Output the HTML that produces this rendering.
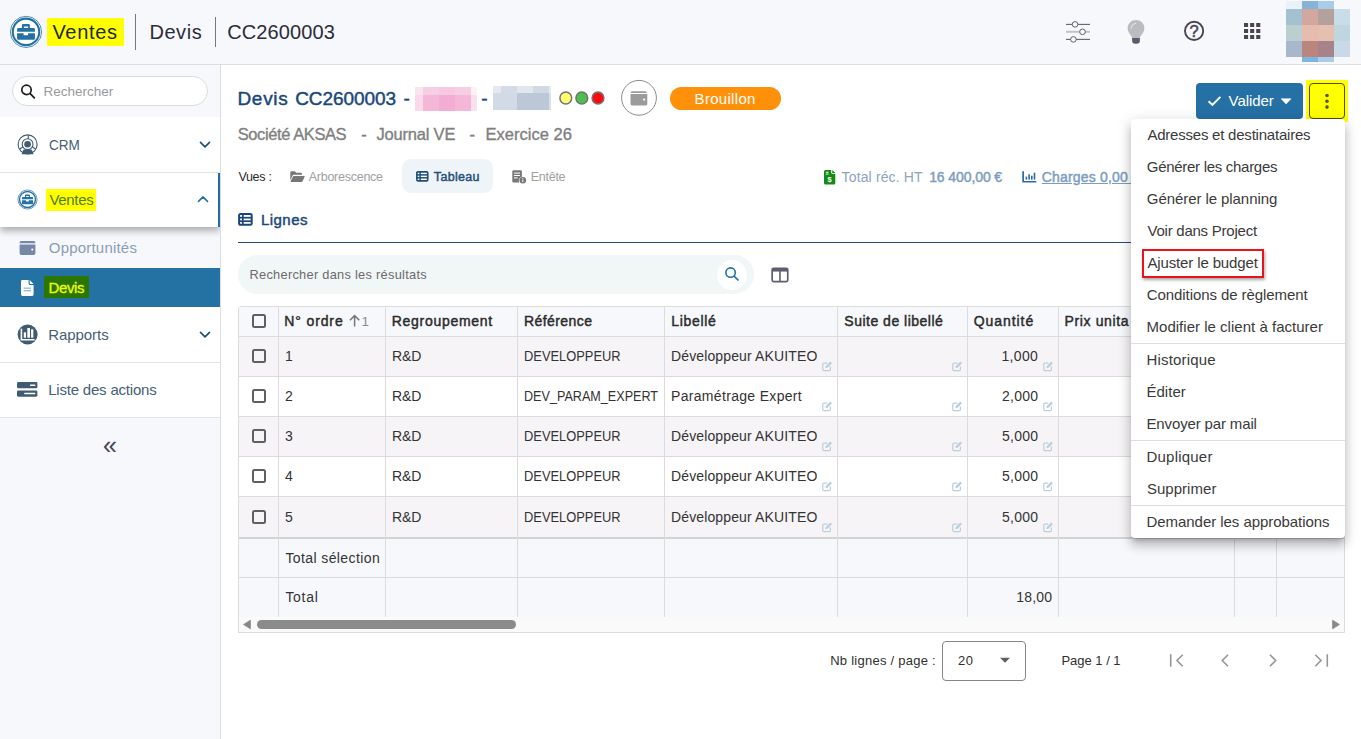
<!DOCTYPE html>
<html lang="fr">
<head>
<meta charset="utf-8">
<title>Devis CC2600003</title>
<style>
*{box-sizing:border-box;margin:0;padding:0}
html,body{width:1361px;height:739px;overflow:hidden;background:#fff;font-family:"Liberation Sans","DejaVu Sans",sans-serif;color:#333}
.a{position:absolute}
.t{position:absolute;white-space:nowrap;line-height:1}
#hdr{left:0;top:0;width:1361px;height:65px;background:#f7f8fc;border-bottom:1px solid #dcdde1}
#side{left:0;top:65px;width:221px;height:674px;background:#f7f8fc;border-right:1px solid #dcdde1}
.hl{background:#ffff00}
.vsep{background:#777;width:1px}
.navrow{left:0;width:220px;background:#fff;border-bottom:1px solid #e3e3e6}
.navtxt{font-size:15px;color:#476075}
</style>
</head>
<body>
<!-- HEADER -->
<div id="hdr" class="a"></div>
<svg class="a" style="left:9px;top:15px" width="34" height="34" viewBox="0 0 34 34">
  <circle cx="17" cy="16.900" r="15.600" fill="#fff" stroke="#2471a3" stroke-width="0.800"/>
  <circle cx="17" cy="16.900" r="13.250" fill="#fff" stroke="#2471a3" stroke-width="2.100"/>
  <path d="M8.100 14.300a1.400 1.400 0 0 1 1.400-1.400h15.050a1.400 1.400 0 0 1 1.400 1.400v2.400H8.100zM12.900 12.900v-2.700a1.200 1.200 0 0 1 1.200-1.200h5.600a1.200 1.200 0 0 1 1.200 1.200v2.700h-1.800v-1.500h-4.200v1.500zM8.100 18.200h6.500v2.100h4.500v-2.100h6.850v5.200a1.400 1.400 0 0 1-1.400 1.400H9.500a1.400 1.400 0 0 1-1.400-1.400z" fill="#2471a3"/>
</svg>
<div class="a hl" style="left:47px;top:18px;width:77px;height:28px"></div>
<div class="t" id="h1" style="left:52.4px;top:22px;font-size:20px;color:#1f2a33;letter-spacing:0.7px">Ventes</div>
<div class="a vsep" style="left:135px;top:14px;height:36px"></div>
<div class="t" id="h2" style="left:149.4px;top:22px;font-size:20px;color:#2c2c3a;letter-spacing:0.56px">Devis</div>
<div class="a vsep" style="left:215px;top:17px;height:30px"></div>
<div class="t" id="h3" style="left:227.2px;top:22px;font-size:20px;color:#2c2c3a;letter-spacing:0.13px">CC2600003</div>


<!-- header right icons -->
<svg class="a" style="left:1064px;top:19px" width="28" height="26" viewBox="0 0 28 26">
  <line x1="2" y1="5.400" x2="26" y2="5.400" stroke="#62606c" stroke-width="1.100"/>
  <line x1="2" y1="12.800" x2="26" y2="12.800" stroke="#c4c4c8" stroke-width="2"/>
  <line x1="2" y1="20.400" x2="26" y2="20.400" stroke="#62606c" stroke-width="1.100"/>
  <g stroke="#62606c" stroke-width="1" fill="#f7f8fc"><circle cx="11.050" cy="5.400" r="2.800"/><circle cx="18.500" cy="12.800" r="2.800"/><circle cx="9.400" cy="20.400" r="2.800"/></g>
</svg>
<svg class="a" style="left:1126px;top:19px" width="20" height="26" viewBox="0 0 20 26">
  <path d="M10 .9a8.400 8.400 0 0 1 8.400 8.400c0 3-1.600 5-2.700 6.400-.9 1.200-1.800 2.200-1.800 3.200H6.100c0-1-.9-2-1.800-3.200C3.200 14.300 1.600 12.300 1.600 9.300A8.400 8.400 0 0 1 10 .9z" fill="#bcbcc0"/>
  <path d="M6.100 18.900h7.800v2.600a3.300 3.300 0 0 1-3.300 3.300H9.400a3.300 3.300 0 0 1-3.300-3.300z" fill="#5d5a6b"/>
  <path d="M5.300 9a4.800 4.800 0 0 1 4.200-4.500" fill="none" stroke="#ececee" stroke-width="1" stroke-linecap="round"/>
</svg>
<svg class="a" style="left:1182px;top:19px" width="24" height="24" viewBox="0 0 24 24">
  <circle cx="12.100" cy="11.900" r="9.100" fill="none" stroke="#4a4452" stroke-width="1.900"/>
  <text x="12.100" y="17.800" text-anchor="middle" font-family="Liberation Sans, sans-serif" font-size="16.500" fill="#4a4452" stroke="#4a4452" stroke-width="0.500">?</text>
</svg>
<svg class="a" style="left:1244px;top:23px" width="17" height="17" viewBox="0 0 17 17" fill="#4a4452">
  <rect x="0" y="0" width="4.100" height="4"/><rect x="6.100" y="0" width="4.100" height="4"/><rect x="12.200" y="0" width="4.100" height="4"/>
  <rect x="0" y="6" width="4.100" height="4"/><rect x="6.100" y="6" width="4.100" height="4"/><rect x="12.200" y="6" width="4.100" height="4"/>
  <rect x="0" y="12" width="4.100" height="4"/><rect x="6.100" y="12" width="4.100" height="4"/><rect x="12.200" y="12" width="4.100" height="4"/>
</svg>
<!-- avatar mosaic -->
<svg class="a" style="left:1286px;top:0" width="64" height="63" viewBox="0 0 64 63" shape-rendering="crispEdges">
  <rect x="0" y="1" width="16" height="8" fill="#eaf1f8"/><rect x="16" y="1" width="16" height="8" fill="#86b4d8"/><rect x="32" y="1" width="16" height="8" fill="#a9cde8"/>
  <rect x="0" y="9" width="16" height="16" fill="#a5c0d0"/><rect x="16" y="9" width="16" height="16" fill="#d1a79e"/><rect x="32" y="9" width="16" height="16" fill="#b5a19c"/><rect x="48" y="9" width="16" height="16" fill="#c8dcea"/>
  <rect x="0" y="25" width="16" height="16" fill="#bccfd0"/><rect x="16" y="25" width="16" height="16" fill="#e6bcae"/><rect x="32" y="25" width="16" height="16" fill="#e5bfaf"/><rect x="48" y="25" width="16" height="16" fill="#c0d6de"/>
  <rect x="0" y="41" width="16" height="16" fill="#a8b8cc"/><rect x="16" y="41" width="16" height="16" fill="#b9857c"/><rect x="32" y="41" width="16" height="16" fill="#a58388"/><rect x="48" y="41" width="16" height="16" fill="#c9d9e8"/>
  <rect x="16" y="57" width="16" height="5" fill="#7db5e0"/><rect x="32" y="57" width="16" height="5" fill="#a9cce8"/>
</svg>

<!-- SIDEBAR -->
<div id="side" class="a"></div>

<!-- search -->
<div class="a" style="left:12px;top:76px;width:196px;height:30px;border:1px solid #dcdcdf;border-radius:15px;background:#fff"></div>
<svg class="a" style="left:20px;top:83px" width="16" height="16" viewBox="0 0 16 16"><circle cx="6.500" cy="6.900" r="4.700" fill="none" stroke="#1f1f1f" stroke-width="1.700"/><line x1="10" y1="10.400" x2="14.300" y2="14.800" stroke="#1f1f1f" stroke-width="1.800" stroke-linecap="round"/></svg>
<div class="t" id="s0" style="left:43.6px;top:85px;font-size:13.500px;color:#9a9a9e;letter-spacing:-0.02px">Rechercher</div>

<!-- CRM -->
<div class="a navrow" style="top:117px;height:56px"></div>
<svg class="a" style="left:16px;top:133px" width="24" height="24" viewBox="0 0 24 24">
  <circle cx="11.600" cy="11.400" r="9.500" fill="#fff" stroke="#3f5c73" stroke-width="1.100"/>
  <path d="M12.300 1.900v4.300M6.700 14l-3.300 2.200M16.500 14l3.300 2.200" stroke="#3f5c73" stroke-width="1.100" fill="none"/>
  <circle cx="11.600" cy="11.200" r="5.400" fill="#fff" stroke="#3f5c73" stroke-width="1.100"/>
  <circle cx="11.600" cy="11.200" r="3.300" fill="#3f5c73"/>
  <path d="M5.600 21.300l1.300-3.600a1.700 1.700 0 0 1 1.600-1.100h6.200a1.700 1.700 0 0 1 1.600 1.100l1.300 3.600z" fill="#3f5c73"/>
</svg>
<div class="t navtxt" id="s1" style="left:49px;top:137px;transform-origin:0 50%;transform:scaleX(0.9044)">CRM</div>
<svg class="a" style="left:198px;top:140px" width="14" height="10" viewBox="0 0 14 10"><path d="M2.500 2.400l4.500 4.500 4.500-4.500" fill="none" stroke="#1f4e79" stroke-width="1.600" stroke-linecap="round" stroke-linejoin="round"/></svg>

<!-- Ventes (open) -->
<div class="a" style="left:0;top:173px;width:220px;height:54px;background:#fff;box-shadow:0 4px 7px rgba(0,0,0,.3);border-right:2px solid #1f6ca6;clip-path:inset(0 0 -14px 0)"></div>
<svg class="a" style="left:16.500px;top:188.700px" width="21" height="21" viewBox="0 0 34 34">
  <circle cx="17" cy="17" r="15.500" fill="#fff" stroke="#2471a3" stroke-width="1.100"/>
  <circle cx="17" cy="17" r="12.900" fill="#fff" stroke="#2471a3" stroke-width="2.300"/>
  <path d="M8.100 14.300a1.400 1.400 0 0 1 1.400-1.400h15.050a1.400 1.400 0 0 1 1.400 1.400v2.400H8.100zM12.900 12.900v-2.700a1.200 1.200 0 0 1 1.200-1.200h5.600a1.200 1.200 0 0 1 1.200 1.200v2.700h-1.800v-1.500h-4.200v1.500zM8.100 18.200h6.500v2.100h4.500v-2.100h6.850v5.200a1.400 1.400 0 0 1-1.400 1.400H9.500a1.400 1.400 0 0 1-1.400-1.400z" fill="#2471a3"/>
</svg>
<div class="a hl" style="left:46px;top:189px;width:50px;height:21.500px"></div>
<div class="t" id="s2" style="left:49.4px;top:192px;font-size:15px;color:#4d7d1a;letter-spacing:-0.3px">Ventes</div>
<svg class="a" style="left:196px;top:194px" width="14" height="10" viewBox="0 0 14 10"><path d="M2.500 7.400l4.500-4.500 4.500 4.500" fill="none" stroke="#2471a3" stroke-width="1.600" stroke-linecap="round" stroke-linejoin="round"/></svg>

<!-- Opportunités -->
<svg class="a" style="left:18.700px;top:241.300px" width="17" height="14" viewBox="0 0 17 14">
  <path d="M2.200 0h12.600a1.600 1.600 0 0 1 1.600 1.600v.6H.6v-.6A1.600 1.600 0 0 1 2.200 0zM.6 3.400h15.800v8.800a1.700 1.700 0 0 1-1.700 1.700H2.300a1.700 1.700 0 0 1-1.700-1.700z" fill="#7588a8"/>
  <circle cx="13.300" cy="8.600" r="1.100" fill="#f7f8fc"/>
</svg>
<div class="t" id="s3" style="left:48.8px;top:240px;font-size:15px;color:#8b9db3;letter-spacing:0.2px">Opportunités</div>

<!-- Devis (selected) -->
<div class="a" style="left:0;top:268px;width:220px;height:39px;background:#2471a3"></div>
<svg class="a" style="left:21px;top:280px" width="13" height="16" viewBox="0 0 13 16">
  <path d="M1.400 0h6.200v3.900a1 1 0 0 0 1 1H12.600v9.700a1.400 1.400 0 0 1-1.400 1.400H1.400A1.400 1.400 0 0 1 0 14.600V1.400A1.400 1.400 0 0 1 1.400 0zM8.700 0l3.900 3.900H8.700z" fill="#fff"/>
  <rect x="2.600" y="7.600" width="7.400" height="1.100" fill="#7fb0d3"/><rect x="2.600" y="10.200" width="7.400" height="1.100" fill="#7fb0d3"/>
</svg>
<div class="a" style="left:44px;top:276px;width:45px;height:22px;background:#2b7600"></div>
<div class="t" id="s4" style="left:48.6px;top:280px;font-size:15px;color:#f0fb10;-webkit-text-stroke:0.300px;letter-spacing:-0.43px">Devis</div>

<!-- Rapports -->
<div class="a navrow" style="top:307px;height:56px;border-top:0"></div>
<svg class="a" style="left:16px;top:323px" width="24" height="24" viewBox="0 0 24 24">
  <circle cx="11.600" cy="11.500" r="10" fill="#3f5c73"/>
  <path d="M4.600 5.800h1.600v10.300h12.400v1.300H4.600z" fill="#fff"/>
  <rect x="7.800" y="9.300" width="2.200" height="5.400" fill="#fff"/><rect x="11.300" y="5" width="2.700" height="9.700" fill="#fff"/><rect x="15.100" y="6.300" width="2.200" height="8.400" fill="#fff"/>
</svg>
<div class="t navtxt" id="s5" style="left:48.2px;top:327px;letter-spacing:-0.06px">Rapports</div>
<svg class="a" style="left:198px;top:330px" width="14" height="10" viewBox="0 0 14 10"><path d="M2.500 2.400l4.500 4.500 4.500-4.500" fill="none" stroke="#1f4e79" stroke-width="1.600" stroke-linecap="round" stroke-linejoin="round"/></svg>

<!-- Liste des actions -->
<div class="a navrow" style="top:363px;height:55px"></div>
<svg class="a" style="left:17px;top:382px" width="21" height="15" viewBox="0 0 21 15">
  <rect x="0" y="0" width="20.400" height="6.300" rx="1.400" fill="#3f5c73"/><rect x="0" y="8.400" width="20.400" height="6.300" rx="1.400" fill="#3f5c73"/>
  <rect x="13" y="2.400" width="5.300" height="1.500" rx=".5" fill="#fff"/><rect x="7.200" y="10.800" width="11.100" height="1.500" rx=".5" fill="#fff"/>
</svg>
<div class="t navtxt" id="s6" style="left:48.2px;top:382px;letter-spacing:-0.2px">Liste des actions</div>
<div class="t" id="s7" style="left:103px;top:433px;font-size:25px;color:#4a4658;letter-spacing:0px">«</div>


<!-- MAIN TITLE -->
<div class="t" id="m1" style="left:237.4px;top:89px;font-size:19px;-webkit-text-stroke:0.45px;color:#1a477a;letter-spacing:0.73px">Devis</div>
<div class="t" id="m2" style="left:295.2px;top:89px;font-size:19px;-webkit-text-stroke:0.45px;color:#1a477a;letter-spacing:-0.07px">CC2600003</div>
<div class="t" id="m3" style="left:403.5px;top:89px;font-size:19px;-webkit-text-stroke:0.45px;color:#1a477a;letter-spacing:0px">-</div>
<svg class="a" style="left:415px;top:87px" width="62" height="24" viewBox="0 0 62 24" shape-rendering="crispEdges">
  <rect x="0" y="0" width="62" height="24" fill="#f8d4e8"/>
  <rect x="0" y="0" width="8" height="8" fill="#fbe3f0"/><rect x="8" y="0" width="16" height="8" fill="#f7cfe5"/><rect x="24" y="0" width="16" height="8" fill="#f6c8e1"/><rect x="40" y="0" width="16" height="8" fill="#f7cfe5"/><rect x="56" y="0" width="6" height="8" fill="#fdf0f7"/>
  <rect x="0" y="8" width="8" height="16" fill="#fad9ea"/><rect x="8" y="8" width="16" height="16" fill="#f4b7d8"/><rect x="24" y="8" width="16" height="16" fill="#f3add4"/><rect x="40" y="8" width="16" height="16" fill="#f4b7d8"/><rect x="56" y="8" width="6" height="16" fill="#fbe1ef"/>
</svg>
<div class="t" id="m4" style="left:481.3px;top:89px;font-size:19px;-webkit-text-stroke:0.45px;color:#1a477a;letter-spacing:0px">-</div>
<svg class="a" style="left:493px;top:86px" width="58" height="24" viewBox="0 0 58 24" shape-rendering="crispEdges">
  <rect x="0" y="0" width="58" height="24" fill="#d0d9e4"/>
  <rect x="0" y="0" width="8" height="7" fill="#e6eaf0"/><rect x="8" y="0" width="16" height="7" fill="#d3dbe6"/><rect x="24" y="0" width="16" height="7" fill="#e2e7ed"/><rect x="40" y="0" width="16" height="7" fill="#d0d9e4"/><rect x="56" y="0" width="2" height="7" fill="#e6eaf0"/>
  <rect x="0" y="7" width="24" height="17" fill="#d1dae5"/><rect x="24" y="7" width="32" height="17" fill="#bcc8d8"/><rect x="56" y="7" width="2" height="17" fill="#d8e0ea"/>
</svg>
<svg class="a" style="left:557px;top:89px" width="50" height="18" viewBox="0 0 50 18">
  <circle cx="8.800" cy="9" r="5.900" fill="#ffff6e" stroke="#737373" stroke-width="1.500"/>
  <circle cx="24.800" cy="9" r="5.900" fill="#4fc04f" stroke="#737373" stroke-width="1.500"/>
  <circle cx="41" cy="9" r="5.900" fill="#ff0a0a" stroke="#737373" stroke-width="1.500"/>
</svg>
<svg class="a" style="left:620px;top:79px" width="38" height="38" viewBox="0 0 38 38">
  <circle cx="19" cy="18.800" r="17.400" fill="#fff" stroke="#8a8a8a" stroke-width="1"/>
  <path d="M12 12.200h13.200a1.500 1.500 0 0 1 1.500 1.500v.3H10.500v-.3A1.500 1.500 0 0 1 12 12.200zM10.500 15h16.800v9.900a1.700 1.700 0 0 1-1.700 1.700H12.200a1.700 1.700 0 0 1-1.700-1.700z" fill="#9b9b9b"/>
  <circle cx="24.100" cy="20.600" r="1.100" fill="#fff"/>
</svg>
<div class="a" style="left:670px;top:87px;width:111px;height:23px;border-radius:12px;background:#ff9009"></div>
<div class="t" id="m5" style="left:694.6px;top:91px;font-size:15px;color:#fff;letter-spacing:0.3px">Brouillon</div>

<!-- subtitle -->
<div class="t" id="m6" style="left:237.7px;top:126px;font-size:16.500px;color:#808080;-webkit-text-stroke:0.350px;letter-spacing:-0.4px">Société AKSAS</div>
<div class="t" id="m7" style="left:361.2px;top:126px;font-size:16.500px;color:#808080;-webkit-text-stroke:0.350px;letter-spacing:0px">-</div>
<div class="t" id="m8" style="left:376.5px;top:126px;font-size:16.500px;color:#808080;-webkit-text-stroke:0.350px;letter-spacing:-0.2px">Journal VE</div>
<div class="t" id="m9" style="left:469.4px;top:126px;font-size:16.500px;color:#808080;-webkit-text-stroke:0.350px;letter-spacing:0px">-</div>
<div class="t" id="m10" style="left:485.5px;top:126px;font-size:16.500px;color:#808080;-webkit-text-stroke:0.350px;letter-spacing:0.02px">Exercice 26</div>

<!-- Vues -->
<div class="t" id="v0" style="left:238.4px;top:171px;font-size:12.500px;color:#2b2b2b;letter-spacing:-0.3px">Vues :</div>
<svg class="a" style="left:290px;top:171px" width="15" height="12" viewBox="0 0 15 12">
  <path d="M.3 1.500A1.200 1.200 0 0 1 1.500.3h3.300l1.400 1.400h4.600a1.200 1.200 0 0 1 1.200 1.200v.9H3.900a1.600 1.600 0 0 0-1.500 1L.3 9.400zM3.900 4.900h10.200a.6.600 0 0 1 .55.850l-2.100 4.600a1 1 0 0 1-.9.600H1.100a.5.500 0 0 1-.45-.7l2.300-4.750a1 1 0 0 1 .95-.6z" fill="#777"/>
</svg>
<div class="t" id="v1" style="left:308.7px;top:171px;font-size:12.500px;color:#a0a0a0;letter-spacing:-0.25px">Arborescence</div>
<div class="a" style="left:402px;top:159px;width:91px;height:34px;border-radius:9px;background:#eef4f7"></div>
<svg class="a" style="left:416px;top:171.300px" width="13" height="11" viewBox="0 0 13 11">
  <rect x=".9" y=".9" width="10.800" height="8.900" rx="1" fill="#fff" stroke="#1f4e79" stroke-width="1.700"/>
  <line x1=".8" y1="3.900" x2="11.800" y2="3.900" stroke="#1f4e79" stroke-width="1.500"/><line x1=".8" y1="6.800" x2="11.800" y2="6.800" stroke="#1f4e79" stroke-width="1.500"/><line x1="4.100" y1=".8" x2="4.100" y2="9.900" stroke="#1f4e79" stroke-width="1.500"/>
</svg>
<div class="t" id="v2" style="left:433.8px;top:171px;font-size:12.500px;-webkit-text-stroke:0.45px;color:#1f4e79;letter-spacing:0.33px">Tableau</div>
<svg class="a" style="left:512px;top:170px" width="15" height="14" viewBox="0 0 15 14">
  <path d="M1.400.3h7.400a1.100 1.100 0 0 1 1.100 1.100v5.300a4 4 0 0 0-2.600 5.900H1.400A1.100 1.100 0 0 1 .3 11.500V1.400A1.100 1.100 0 0 1 1.400.3z" fill="#777"/>
  <rect x="2" y="2.600" width="6" height="1" fill="#fff"/><rect x="2" y="5" width="6" height="1" fill="#fff"/><rect x="2" y="7.400" width="3.600" height="1" fill="#fff"/>
  <circle cx="10.800" cy="10.200" r="3.300" fill="#777"/><rect x="10.300" y="9.700" width="1" height="2.400" fill="#fff"/><rect x="10.300" y="8.200" width="1" height="1" fill="#fff"/>
</svg>
<div class="t" id="v3" style="left:530.7px;top:171px;font-size:12.500px;color:#a0a0a0;letter-spacing:-0.25px">Entête</div>

<!-- totals -->
<svg class="a" style="left:824px;top:170px" width="12" height="15" viewBox="0 0 12 15">
  <path d="M1.500 0h5.700v2.700a1 1 0 0 0 1 1h3.100v9.400a1.500 1.500 0 0 1-1.500 1.500H1.500A1.500 1.500 0 0 1 0 13.100V1.500A1.500 1.500 0 0 1 1.500 0zM8.200 0l3.100 3.100H8.200z" fill="#148a14"/>
  <rect x="1.800" y="1.800" width="2.800" height=".9" fill="#fff"/><rect x="1.800" y="3.600" width="2.800" height=".9" fill="#fff"/>
  <text x="5.700" y="12.300" font-family="Liberation Sans, sans-serif" font-size="7.500" font-weight="bold" text-anchor="middle" fill="#fff">$</text>
</svg>
<div class="t" id="t1" style="left:841.6px;top:170px;font-size:14px;color:#8ca5bf;letter-spacing:0.14px">Total réc. HT</div>
<div class="t" id="t2" style="left:929.2px;top:170px;font-size:14px;-webkit-text-stroke:0.45px;color:#7d9dbf;letter-spacing:-0.1px">16 400,00 €</div>
<svg class="a" style="left:1022px;top:171px" width="15" height="12" viewBox="0 0 15 12">
  <path d="M.3.300h1.700v9.600h12.300v1.700H.3z" fill="#2c6aa0"/>
  <rect x="3.600" y="5.600" width="1.600" height="3" fill="#2c6aa0"/><rect x="6.300" y="3.300" width="1.600" height="5.300" fill="#2c6aa0"/><rect x="9" y="4.700" width="1.600" height="3.900" fill="#2c6aa0"/><rect x="11.700" y="1.700" width="1.600" height="6.900" fill="#2c6aa0"/>
</svg>
<div class="t" id="t3" style="left:1041.8px;top:170px;font-size:14px;-webkit-text-stroke:0.45px;color:#7d9dbf;text-decoration:underline;letter-spacing:0.17px">Charges 0,00&nbsp;</div>
<div class="t" id="t4" style="left:1131.500px;top:170px;font-size:14px;-webkit-text-stroke:0.45px;color:#7d9dbf;text-decoration:underline">€</div>

<!-- Valider / more -->
<div class="a" style="left:1196px;top:83px;width:107px;height:36px;border-radius:4px;background:#2570a4"></div>
<svg class="a" style="left:1207px;top:95px" width="15" height="12" viewBox="0 0 15 12"><path d="M1.600 6.200l3.800 3.700 8-8" fill="none" stroke="#fff" stroke-width="2"/></svg>
<div class="t" id="b1" style="left:1228.6px;top:93px;font-size:15px;color:#fff;letter-spacing:-0.07px">Valider</div>
<svg class="a" style="left:1280px;top:98px" width="12" height="7" viewBox="0 0 12 7"><path d="M1.200 .8h9.800L6.100 6z" fill="#fff" stroke="#fff" stroke-width=".6" stroke-linejoin="round"/></svg>
<div class="a hl" style="left:1306px;top:80px;width:42px;height:42px"></div>
<div class="a" style="left:1309px;top:83px;width:36px;height:36px;border-radius:4px;border:1px solid #4c4c10"></div>
<svg class="a" style="left:1324px;top:93px" width="6" height="17" viewBox="0 0 6 17" fill="#55550a"><circle cx="3" cy="2.500" r="1.800"/><circle cx="3" cy="8.300" r="1.800"/><circle cx="3" cy="14.100" r="1.800"/></svg>

<!-- Lignes -->
<svg class="a" style="left:238px;top:213px" width="15" height="13" viewBox="0 0 15 13">
  <rect x="1.100" y="1.100" width="12.600" height="10.700" rx="1.200" fill="#fff" stroke="#1a477a" stroke-width="2"/>
  <line x1="1" y1="4.700" x2="13.800" y2="4.700" stroke="#1a477a" stroke-width="1.700"/><line x1="1" y1="8.200" x2="13.800" y2="8.200" stroke="#1a477a" stroke-width="1.700"/><line x1="4.800" y1="1" x2="4.800" y2="12" stroke="#1a477a" stroke-width="1.700"/>
</svg>
<div class="t" id="l1" style="left:261px;top:212px;font-size:15px;-webkit-text-stroke:0.45px;color:#1a477a;letter-spacing:0.45px">Lignes</div>
<div class="a" style="left:238px;top:241.500px;width:1107px;height:1.500px;background:#1f4e79"></div>

<!-- results search -->
<div class="a" style="left:238px;top:255px;width:516px;height:39px;border-radius:20px;background:#f1f6f7"></div>
<div class="t" id="l2" style="left:249.5px;top:269px;font-size:12.800px;color:#6b6b6b;letter-spacing:0.28px">Rechercher dans les résultats</div>
<div class="a" style="left:717px;top:260px;width:30px;height:30px;border-radius:15px;background:#fff"></div>
<svg class="a" style="left:724px;top:266px" width="16" height="16" viewBox="0 0 16 16"><circle cx="6.600" cy="6.600" r="4.700" fill="none" stroke="#1f6fad" stroke-width="1.600"/><line x1="10" y1="10" x2="14.500" y2="14.500" stroke="#1f6fad" stroke-width="1.700" stroke-linecap="butt"/></svg>
<svg class="a" style="left:771px;top:266.500px" width="18" height="16" viewBox="0 0 18 16">
  <rect x="1.150" y="1.350" width="15.600" height="13.200" rx="1.500" fill="#fff" stroke="#5f5d6e" stroke-width="1.700"/><rect x="1.150" y="1.350" width="15.600" height="3.200" fill="#5f5d6e"/><line x1="8.950" y1="2" x2="8.950" y2="14" stroke="#5f5d6e" stroke-width="1.600"/>
</svg>

<!-- TABLE -->
<div class="a" style="left:238px;top:306px;width:1107px;height:327px;border:1px solid #dcdcdf;border-radius:3px 3px 0 0;background:#fafafa"></div>
<div class="a" style="left:239px;top:307px;width:1105px;height:30px;background:#f7f8fc;border-bottom:1px solid #dcdcdf"></div>
<div class="a" style="left:239px;top:337px;width:1105px;height:40px;background:#f6f4f7;border-bottom:1px solid #dcdcdf"></div>
<div class="a" style="left:239px;top:377px;width:1105px;height:40px;background:#fff;border-bottom:1px solid #dcdcdf"></div>
<div class="a" style="left:239px;top:417px;width:1105px;height:40px;background:#f6f4f7;border-bottom:1px solid #dcdcdf"></div>
<div class="a" style="left:239px;top:457px;width:1105px;height:40px;background:#fff;border-bottom:1px solid #dcdcdf"></div>
<div class="a" style="left:239px;top:497px;width:1105px;height:40px;background:#f6f4f7;"></div>
<div class="a" style="left:239px;top:539px;width:1105px;height:39px;background:#f7f8fc;border-bottom:1px solid #dcdcdf"></div>
<div class="a" style="left:239px;top:578px;width:1105px;height:39px;background:#f7f8fc;"></div>
<div class="a" style="left:239px;top:537px;width:1105px;height:2px;background:#d3d3d6"></div>
<div class="a" style="left:278px;top:307px;width:1px;height:310px;background:#dcdcdf"></div>
<div class="a" style="left:385px;top:307px;width:1px;height:310px;background:#dcdcdf"></div>
<div class="a" style="left:517px;top:307px;width:1px;height:310px;background:#dcdcdf"></div>
<div class="a" style="left:664px;top:307px;width:1px;height:310px;background:#dcdcdf"></div>
<div class="a" style="left:837px;top:307px;width:1px;height:310px;background:#dcdcdf"></div>
<div class="a" style="left:967px;top:307px;width:1px;height:310px;background:#dcdcdf"></div>
<div class="a" style="left:1058px;top:307px;width:1px;height:310px;background:#dcdcdf"></div>
<div class="a" style="left:1234px;top:307px;width:1px;height:310px;background:#dcdcdf"></div>
<div class="a" style="left:1276px;top:307px;width:1px;height:310px;background:#dcdcdf"></div>
<div class="a" style="left:252px;top:314px;width:14px;height:14px;border:2px solid #606060;border-radius:2.500px"></div>
<div class="t" id="hd1" style="left:284.3px;top:314px;font-size:14px;-webkit-text-stroke:0.45px;color:#2b2b2b;letter-spacing:0.87px">N° ordre</div>
<div class="t" id="hd2" style="left:391.8px;top:314px;font-size:14px;-webkit-text-stroke:0.45px;color:#2b2b2b;letter-spacing:0.71px">Regroupement</div>
<div class="t" id="hd3" style="left:524px;top:314px;font-size:14px;-webkit-text-stroke:0.45px;color:#2b2b2b;letter-spacing:0.42px">Référence</div>
<div class="t" id="hd4" style="left:671.3px;top:314px;font-size:14px;-webkit-text-stroke:0.45px;color:#2b2b2b;letter-spacing:0.66px">Libellé</div>
<div class="t" id="hd5" style="left:844.3px;top:314px;font-size:14px;-webkit-text-stroke:0.45px;color:#2b2b2b;letter-spacing:0.5px">Suite de libellé</div>
<div class="t" id="hd6" style="left:973.8px;top:314px;font-size:14px;-webkit-text-stroke:0.45px;color:#2b2b2b;letter-spacing:0.93px">Quantité</div>
<div class="t" id="hd7" style="left:1064.6px;top:314px;font-size:14px;-webkit-text-stroke:0.45px;color:#2b2b2b;letter-spacing:0.61px">Prix unita</div>
<svg class="a" style="left:348px;top:314px" width="14" height="14" viewBox="0 0 14 14"><path d="M6.600 12.500V1.800M1.900 6.300l4.700-4.700 4.700 4.700" fill="none" stroke="#777" stroke-width="1.500"/></svg>
<div class="t" id="hd8" style="left:361.5px;top:315px;font-size:13.500px;color:#8a8a8a;letter-spacing:0px">1</div>
<div class="a" style="left:252px;top:349px;width:14px;height:14px;border:2px solid #606060;border-radius:2.500px"></div>
<div class="t" id="r0a" style="left:285px;top:349px;font-size:14px;color:#333">1</div>
<div class="t" id="r0b" style="left:391.9px;top:349px;font-size:14px;color:#333;letter-spacing:-0.07px">R&amp;D</div>
<div class="t" id="r0c" style="left:524px;top:349px;font-size:14px;color:#333;transform-origin:0 50%;transform:scaleX(0.9198)">DEVELOPPEUR</div>
<div class="t" id="r0d" style="left:671px;top:349px;font-size:14px;color:#333;letter-spacing:0.13px">Développeur AKUITEO</div>
<div class="t" id="r0e" style="left:1001.4px;top:349px;font-size:14px;color:#333;letter-spacing:0.37px">1,000</div>
<svg class="a" style="left:821.8px;top:361px" width="10.500" height="10.500" viewBox="0 0 10.500 10.500"><path d="M5.300 2.100H1.900a1.100 1.100 0 0 0-1.100 1.100v5.400a1.100 1.100 0 0 0 1.100 1.100h5.400a1.100 1.100 0 0 0 1.100-1.100V5.400" fill="none" stroke="#bccfdc" stroke-width="1.200"/><path d="M8.300.5l1.700 1.700-4.500 4.500-2.200.5.500-2.200z" fill="#bccfdc"/></svg>
<svg class="a" style="left:951.8px;top:361px" width="10.500" height="10.500" viewBox="0 0 10.500 10.500"><path d="M5.300 2.100H1.900a1.100 1.100 0 0 0-1.100 1.100v5.400a1.100 1.100 0 0 0 1.100 1.100h5.400a1.100 1.100 0 0 0 1.100-1.100V5.400" fill="none" stroke="#bccfdc" stroke-width="1.200"/><path d="M8.300.5l1.700 1.700-4.500 4.500-2.200.5.500-2.200z" fill="#bccfdc"/></svg>
<svg class="a" style="left:1042.8px;top:361px" width="10.500" height="10.500" viewBox="0 0 10.500 10.500"><path d="M5.300 2.100H1.900a1.100 1.100 0 0 0-1.100 1.100v5.400a1.100 1.100 0 0 0 1.100 1.100h5.400a1.100 1.100 0 0 0 1.100-1.100V5.400" fill="none" stroke="#bccfdc" stroke-width="1.200"/><path d="M8.300.5l1.700 1.700-4.500 4.500-2.200.5.500-2.200z" fill="#bccfdc"/></svg>
<div class="a" style="left:252px;top:389px;width:14px;height:14px;border:2px solid #606060;border-radius:2.500px"></div>
<div class="t" id="r1a" style="left:285px;top:389px;font-size:14px;color:#333">2</div>
<div class="t" id="r1b" style="left:391.9px;top:389px;font-size:14px;color:#333;letter-spacing:-0.07px">R&amp;D</div>
<div class="t" id="r1c" style="left:524px;top:389px;font-size:14px;color:#333;transform-origin:0 50%;transform:scaleX(0.9003)">DEV_PARAM_EXPERT</div>
<div class="t" id="r1d" style="left:671px;top:389px;font-size:14px;color:#333;letter-spacing:0.32px">Paramétrage Expert</div>
<div class="t" id="r1e" style="left:1001.9px;top:389px;font-size:14px;color:#333;letter-spacing:0.3px">2,000</div>
<svg class="a" style="left:821.8px;top:401px" width="10.500" height="10.500" viewBox="0 0 10.500 10.500"><path d="M5.300 2.100H1.900a1.100 1.100 0 0 0-1.100 1.100v5.400a1.100 1.100 0 0 0 1.100 1.100h5.400a1.100 1.100 0 0 0 1.100-1.100V5.400" fill="none" stroke="#bccfdc" stroke-width="1.200"/><path d="M8.300.5l1.700 1.700-4.500 4.500-2.200.5.500-2.200z" fill="#bccfdc"/></svg>
<svg class="a" style="left:951.8px;top:401px" width="10.500" height="10.500" viewBox="0 0 10.500 10.500"><path d="M5.300 2.100H1.900a1.100 1.100 0 0 0-1.100 1.100v5.400a1.100 1.100 0 0 0 1.100 1.100h5.400a1.100 1.100 0 0 0 1.100-1.100V5.400" fill="none" stroke="#bccfdc" stroke-width="1.200"/><path d="M8.300.5l1.700 1.700-4.500 4.500-2.200.5.500-2.200z" fill="#bccfdc"/></svg>
<svg class="a" style="left:1042.8px;top:401px" width="10.500" height="10.500" viewBox="0 0 10.500 10.500"><path d="M5.300 2.100H1.900a1.100 1.100 0 0 0-1.100 1.100v5.400a1.100 1.100 0 0 0 1.100 1.100h5.400a1.100 1.100 0 0 0 1.100-1.100V5.400" fill="none" stroke="#bccfdc" stroke-width="1.200"/><path d="M8.300.5l1.700 1.700-4.500 4.500-2.200.5.500-2.200z" fill="#bccfdc"/></svg>
<div class="a" style="left:252px;top:429px;width:14px;height:14px;border:2px solid #606060;border-radius:2.500px"></div>
<div class="t" id="r2a" style="left:285px;top:429px;font-size:14px;color:#333">3</div>
<div class="t" id="r2b" style="left:391.9px;top:429px;font-size:14px;color:#333;letter-spacing:-0.07px">R&amp;D</div>
<div class="t" id="r2c" style="left:524px;top:429px;font-size:14px;color:#333;transform-origin:0 50%;transform:scaleX(0.9198)">DEVELOPPEUR</div>
<div class="t" id="r2d" style="left:671px;top:429px;font-size:14px;color:#333;letter-spacing:0.13px">Développeur AKUITEO</div>
<div class="t" id="r2e" style="left:1001.9px;top:429px;font-size:14px;color:#333;letter-spacing:0.3px">5,000</div>
<svg class="a" style="left:821.8px;top:441px" width="10.500" height="10.500" viewBox="0 0 10.500 10.500"><path d="M5.300 2.100H1.900a1.100 1.100 0 0 0-1.100 1.100v5.400a1.100 1.100 0 0 0 1.100 1.100h5.400a1.100 1.100 0 0 0 1.100-1.100V5.400" fill="none" stroke="#bccfdc" stroke-width="1.200"/><path d="M8.300.5l1.700 1.700-4.500 4.500-2.200.5.500-2.200z" fill="#bccfdc"/></svg>
<svg class="a" style="left:951.8px;top:441px" width="10.500" height="10.500" viewBox="0 0 10.500 10.500"><path d="M5.300 2.100H1.900a1.100 1.100 0 0 0-1.100 1.100v5.400a1.100 1.100 0 0 0 1.100 1.100h5.400a1.100 1.100 0 0 0 1.100-1.100V5.400" fill="none" stroke="#bccfdc" stroke-width="1.200"/><path d="M8.300.5l1.700 1.700-4.500 4.500-2.200.5.500-2.200z" fill="#bccfdc"/></svg>
<svg class="a" style="left:1042.8px;top:441px" width="10.500" height="10.500" viewBox="0 0 10.500 10.500"><path d="M5.300 2.100H1.900a1.100 1.100 0 0 0-1.100 1.100v5.400a1.100 1.100 0 0 0 1.100 1.100h5.400a1.100 1.100 0 0 0 1.100-1.100V5.400" fill="none" stroke="#bccfdc" stroke-width="1.200"/><path d="M8.300.5l1.700 1.700-4.500 4.500-2.200.5.500-2.200z" fill="#bccfdc"/></svg>
<div class="a" style="left:252px;top:469px;width:14px;height:14px;border:2px solid #606060;border-radius:2.500px"></div>
<div class="t" id="r3a" style="left:285px;top:469px;font-size:14px;color:#333">4</div>
<div class="t" id="r3b" style="left:391.9px;top:469px;font-size:14px;color:#333;letter-spacing:-0.07px">R&amp;D</div>
<div class="t" id="r3c" style="left:524px;top:469px;font-size:14px;color:#333;transform-origin:0 50%;transform:scaleX(0.9198)">DEVELOPPEUR</div>
<div class="t" id="r3d" style="left:671px;top:469px;font-size:14px;color:#333;letter-spacing:0.13px">Développeur AKUITEO</div>
<div class="t" id="r3e" style="left:1001.9px;top:469px;font-size:14px;color:#333;letter-spacing:0.3px">5,000</div>
<svg class="a" style="left:821.8px;top:481px" width="10.500" height="10.500" viewBox="0 0 10.500 10.500"><path d="M5.300 2.100H1.900a1.100 1.100 0 0 0-1.100 1.100v5.400a1.100 1.100 0 0 0 1.100 1.100h5.400a1.100 1.100 0 0 0 1.100-1.100V5.400" fill="none" stroke="#bccfdc" stroke-width="1.200"/><path d="M8.300.5l1.700 1.700-4.500 4.500-2.200.5.500-2.200z" fill="#bccfdc"/></svg>
<svg class="a" style="left:951.8px;top:481px" width="10.500" height="10.500" viewBox="0 0 10.500 10.500"><path d="M5.300 2.100H1.900a1.100 1.100 0 0 0-1.100 1.100v5.400a1.100 1.100 0 0 0 1.100 1.100h5.400a1.100 1.100 0 0 0 1.100-1.100V5.400" fill="none" stroke="#bccfdc" stroke-width="1.200"/><path d="M8.300.5l1.700 1.700-4.500 4.500-2.200.5.500-2.200z" fill="#bccfdc"/></svg>
<svg class="a" style="left:1042.8px;top:481px" width="10.500" height="10.500" viewBox="0 0 10.500 10.500"><path d="M5.300 2.100H1.900a1.100 1.100 0 0 0-1.100 1.100v5.400a1.100 1.100 0 0 0 1.100 1.100h5.400a1.100 1.100 0 0 0 1.100-1.100V5.400" fill="none" stroke="#bccfdc" stroke-width="1.200"/><path d="M8.300.5l1.700 1.700-4.500 4.500-2.200.5.500-2.200z" fill="#bccfdc"/></svg>
<div class="a" style="left:252px;top:510px;width:14px;height:14px;border:2px solid #606060;border-radius:2.500px"></div>
<div class="t" id="r4a" style="left:285px;top:510px;font-size:14px;color:#333">5</div>
<div class="t" id="r4b" style="left:391.9px;top:510px;font-size:14px;color:#333;letter-spacing:-0.07px">R&amp;D</div>
<div class="t" id="r4c" style="left:524px;top:510px;font-size:14px;color:#333;transform-origin:0 50%;transform:scaleX(0.9198)">DEVELOPPEUR</div>
<div class="t" id="r4d" style="left:671px;top:510px;font-size:14px;color:#333;letter-spacing:0.13px">Développeur AKUITEO</div>
<div class="t" id="r4e" style="left:1001.9px;top:510px;font-size:14px;color:#333;letter-spacing:0.3px">5,000</div>
<svg class="a" style="left:821.8px;top:522px" width="10.500" height="10.500" viewBox="0 0 10.500 10.500"><path d="M5.300 2.100H1.900a1.100 1.100 0 0 0-1.100 1.100v5.400a1.100 1.100 0 0 0 1.100 1.100h5.400a1.100 1.100 0 0 0 1.100-1.100V5.400" fill="none" stroke="#bccfdc" stroke-width="1.200"/><path d="M8.300.5l1.700 1.700-4.500 4.500-2.200.5.500-2.200z" fill="#bccfdc"/></svg>
<svg class="a" style="left:951.8px;top:522px" width="10.500" height="10.500" viewBox="0 0 10.500 10.500"><path d="M5.300 2.100H1.900a1.100 1.100 0 0 0-1.100 1.100v5.400a1.100 1.100 0 0 0 1.100 1.100h5.400a1.100 1.100 0 0 0 1.100-1.100V5.400" fill="none" stroke="#bccfdc" stroke-width="1.200"/><path d="M8.300.5l1.700 1.700-4.500 4.500-2.200.5.500-2.200z" fill="#bccfdc"/></svg>
<svg class="a" style="left:1042.8px;top:522px" width="10.500" height="10.500" viewBox="0 0 10.500 10.500"><path d="M5.300 2.100H1.900a1.100 1.100 0 0 0-1.100 1.100v5.400a1.100 1.100 0 0 0 1.100 1.100h5.400a1.100 1.100 0 0 0 1.100-1.100V5.400" fill="none" stroke="#bccfdc" stroke-width="1.200"/><path d="M8.300.5l1.700 1.700-4.500 4.500-2.200.5.500-2.200z" fill="#bccfdc"/></svg>
<div class="t" id="f1" style="left:285.4px;top:551px;font-size:14px;color:#333;letter-spacing:0.4px">Total sélection</div>
<div class="t" id="f2" style="left:285.4px;top:590px;font-size:14px;color:#333;letter-spacing:0.7px">Total</div>
<div class="t" id="f3" style="left:1016.2px;top:590px;font-size:14px;color:#333;letter-spacing:0.2px">18,00</div>
<div class="a" style="left:257px;top:620px;width:259px;height:9px;border-radius:5px;background:#8b8b8b"></div>
<svg class="a" style="left:242px;top:619px" width="10" height="11" viewBox="0 0 10 11"><path d="M8.400 1.200v8.600L1.600 5.500z" fill="#888" stroke="#888" stroke-width=".8" stroke-linejoin="round"/></svg>
<svg class="a" style="left:1331px;top:619px" width="10" height="11" viewBox="0 0 10 11"><path d="M1.600 1.200v8.600L8.400 5.500z" fill="#888" stroke="#888" stroke-width=".8" stroke-linejoin="round"/></svg>
<div class="t" id="p1" style="left:830.2px;top:654px;font-size:13px;color:#2f2f2f;letter-spacing:0.25px">Nb lignes / page :</div>
<div class="a" style="left:942px;top:641px;width:84px;height:40px;border:1px solid #858585;border-radius:4px;background:#fff"></div>
<div class="t" id="p2" style="left:958px;top:654px;font-size:13px;color:#2f2f2f;letter-spacing:0.5px">20</div>
<svg class="a" style="left:999px;top:657px" width="12" height="7" viewBox="0 0 12 7"><path d="M1 .8h10L6 5.800z" fill="#5f5f5f"/></svg>
<div class="t" id="p3" style="left:1061.4px;top:654px;font-size:13px;color:#2f2f2f;letter-spacing:-0.01px">Page 1 / 1</div>
<svg class="a" style="left:1169px;top:653px" width="17" height="15" viewBox="0 0 17 15"><path d="M1.700 1.300v12.400M13.700 1.800L8 7.500l5.700 5.700" fill="none" stroke="#969696" stroke-width="1.600"/></svg>
<svg class="a" style="left:1218px;top:653px" width="13" height="15" viewBox="0 0 13 15"><path d="M10 1.800L4.300 7.500l5.700 5.700" fill="none" stroke="#969696" stroke-width="1.600"/></svg>
<svg class="a" style="left:1267px;top:653px" width="13" height="15" viewBox="0 0 13 15"><path d="M3 1.800l5.700 5.700L3 13.200" fill="none" stroke="#969696" stroke-width="1.600"/></svg>
<svg class="a" style="left:1312px;top:653px" width="17" height="15" viewBox="0 0 17 15"><path d="M15.300 1.300v12.400M3.300 1.800L9 7.500l-5.700 5.700" fill="none" stroke="#969696" stroke-width="1.600"/></svg>
<!-- DROPDOWN -->
<div class="a" style="left:1131px;top:119px;width:214px;height:419px;background:#fff;border-radius:4px;box-shadow:0 5px 5px -3px rgba(0,0,0,.2),0 8px 10px 1px rgba(0,0,0,.14),0 3px 14px 2px rgba(0,0,0,.12)"></div>
<div class="t" id="d0" style="left:1147.4px;top:127px;font-size:15px;color:#3a3a3a;letter-spacing:-0.22px">Adresses et destinataires</div>
<div class="t" id="d1" style="left:1146.8px;top:159px;font-size:15px;color:#3a3a3a;letter-spacing:-0.29px">Générer les charges</div>
<div class="t" id="d2" style="left:1146.8px;top:191px;font-size:15px;color:#3a3a3a;letter-spacing:-0.07px">Générer le planning</div>
<div class="t" id="d3" style="left:1147.5px;top:223px;font-size:15px;color:#3a3a3a;letter-spacing:-0.24px">Voir dans Project</div>
<div class="t" id="d4" style="left:1147.4px;top:255px;font-size:15px;color:#3a3a3a;letter-spacing:-0.13px">Ajuster le budget</div>
<div class="t" id="d5" style="left:1146.8px;top:287px;font-size:15px;color:#3a3a3a;letter-spacing:-0.08px">Conditions de règlement</div>
<div class="t" id="d6" style="left:1146.5px;top:319px;font-size:15px;color:#3a3a3a;letter-spacing:0.02px">Modifier le client à facturer</div>
<div class="t" id="d7" style="left:1146.5px;top:352px;font-size:15px;color:#3a3a3a;letter-spacing:0.17px">Historique</div>
<div class="t" id="d8" style="left:1146.5px;top:384px;font-size:15px;color:#3a3a3a;letter-spacing:0.01px">Éditer</div>
<div class="t" id="d9" style="left:1146.5px;top:416px;font-size:15px;color:#3a3a3a;letter-spacing:-0.14px">Envoyer par mail</div>
<div class="t" id="d10" style="left:1146.5px;top:449px;font-size:15px;color:#3a3a3a;letter-spacing:0.21px">Dupliquer</div>
<div class="t" id="d11" style="left:1146.9px;top:481px;font-size:15px;color:#3a3a3a;letter-spacing:0.04px">Supprimer</div>
<div class="t" id="d12" style="left:1146.5px;top:514px;font-size:15px;color:#3a3a3a;letter-spacing:-0.05px">Demander les approbations</div>
<div class="a" style="left:1131px;top:343px;width:214px;height:1px;background:#dedede"></div>
<div class="a" style="left:1131px;top:440px;width:214px;height:1px;background:#dedede"></div>
<div class="a" style="left:1131px;top:505px;width:214px;height:1px;background:#dedede"></div>
<div class="a" style="left:1142px;top:249px;width:122px;height:29px;border:2px solid #e8131b;box-shadow:1px 2px 3px rgba(0,0,0,.35)"></div>
</body>
</html>
